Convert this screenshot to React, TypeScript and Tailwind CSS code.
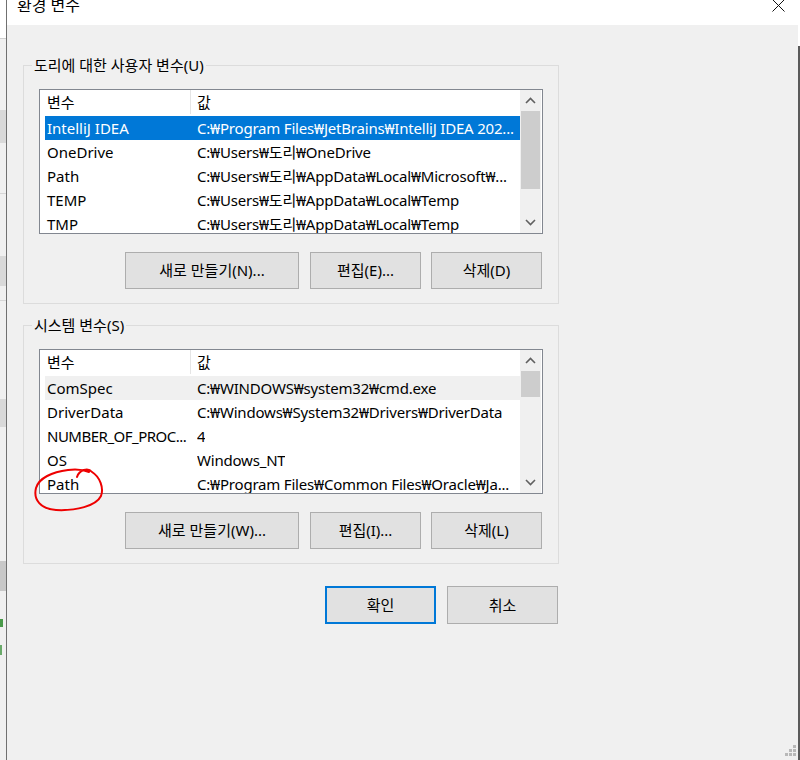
import React from "react";

type Row = { name: string; value: string; tone?: "selected" | "gray"; tight?: boolean };

const userRows: Row[] = [
	{ name: "IntelliJ IDEA", value: "C:₩Program Files₩JetBrains₩IntelliJ IDEA 202...", tone: "selected" },
	{ name: "OneDrive", value: "C:₩Users₩도리₩OneDrive" },
	{ name: "Path", value: "C:₩Users₩도리₩AppData₩Local₩Microsoft₩..." },
	{ name: "TEMP", value: "C:₩Users₩도리₩AppData₩Local₩Temp" },
	{ name: "TMP", value: "C:₩Users₩도리₩AppData₩Local₩Temp" },
];

const systemRows: Row[] = [
	{ name: "ComSpec", value: "C:₩WINDOWS₩system32₩cmd.exe", tone: "gray" },
	{ name: "DriverData", value: "C:₩Windows₩System32₩Drivers₩DriverData" },
	{ name: "NUMBER_OF_PROC...", value: "4", tight: true },
	{ name: "OS", value: "Windows_NT" },
	{ name: "Path", value: "C:₩Program Files₩Common Files₩Oracle₩Ja..." },
];

function Chevron({ up }: { up?: boolean }) {
	return (
		<svg width="11" height="7" viewBox="0 0 11 7" className="text-[#606060]">
			<path
				d={up ? "M1 6 L5.5 1.5 L10 6" : "M1 1 L5.5 5.5 L10 1"}
				fill="none"
				stroke="currentColor"
				strokeWidth="1.6"
			/>
		</svg>
	);
}

function ListBox({ rows, thumb }: { rows: Row[]; thumb: "tall" | "short" }) {
	return (
		<div className="flex h-[145px] w-[504px] border border-[#828790] bg-white">
			<div className="flex min-w-0 flex-1 flex-col overflow-hidden">
				<div className="flex h-[24px] shrink-0 items-center">
					<div className="flex h-full w-[151px] items-center border-r border-[#e5e5e5] pl-[7px]">변수</div>
					<div className="pl-[6px]">값</div>
				</div>
				<div className="flex flex-col pl-[5px] pt-[2px]">
					{rows.map((r) => (
						<div
							key={r.name}
							className={
								"flex h-[24px] shrink-0 items-center whitespace-nowrap " +
								(r.tone === "selected"
									? "bg-[#0078d7] text-white"
									: r.tone === "gray"
										? "bg-[#f0f0f0]"
										: "")
							}
						>
							<div
								className={
									"w-[152px] shrink-0 overflow-hidden pl-[2px] " + (r.tight ? "tracking-[-0.5px]" : "")
								}
							>
								{r.name}
							</div>
							<div className="overflow-hidden tracking-[-0.2px]">{r.value}</div>
						</div>
					))}
				</div>
			</div>
			<div className="mr-px flex w-[21px] flex-col bg-[#f0f0f0]">
				<div className="flex h-[21px] items-center justify-center">
					<Chevron up />
				</div>
				<div className={"mx-px bg-[#cdcdcd] " + (thumb === "tall" ? "h-[78px]" : "h-[26px]")} />
				<div className="flex-1" />
				<div className="flex h-[22px] items-center justify-center">
					<Chevron />
				</div>
			</div>
		</div>
	);
}

function Btn({ label, w }: { label: string; w: string }) {
	return (
		<div className={"flex h-[37px] items-center justify-center border border-[#adadad] bg-[#e1e1e1] " + w}>
			{label}
		</div>
	);
}

function GroupBox({
	title,
	rows,
	thumb,
	buttons,
}: {
	title: string;
	rows: Row[];
	thumb: "tall" | "short";
	buttons: string[];
}) {
	return (
		<div className="relative h-[239px] w-[536px] border border-[#dcdcdc] pl-[15px] pt-[23px]">
			<span className="absolute -top-[11px] left-[8px] bg-[#f0f0f0] px-[2px] leading-[20px]">{title}</span>
			<ListBox rows={rows} thumb={thumb} />
			<div className="mt-[18px] flex pl-[86px]">
				<Btn label={buttons[0]} w="w-[174px]" />
				<div className="ml-[11px]">
					<Btn label={buttons[1]} w="w-[111px]" />
				</div>
				<div className="ml-[10px]">
					<Btn label={buttons[2]} w="w-[111px]" />
				</div>
			</div>
		</div>
	);
}

function LeftStrip() {
	return (
		<div className="flex w-[6px] shrink-0 flex-col bg-[#f0f0f0]">
			<div className="h-[38px] bg-white" />
			<div className="h-px bg-[#d0d0d0]" />
			<div className="mt-[71px] h-[33px] bg-[#d9d9d9]" />
			<div className="mt-[50px] h-px bg-[#d6d6d6]" />
			<div className="mt-[62px] h-[30px] bg-[#d9d9d9]" />
			<div className="mt-[14px] h-px bg-[#d6d6d6]" />
			<div className="mt-[98px] h-[28px] bg-[#d9d9d9]" />
			<div className="mt-[134px] h-[30px] bg-[#c8c8c8]" />
			<div className="mt-[28px] h-[8px] w-[3px] bg-[#4a9a4a]" />
			<div className="mt-[18px] h-[10px] w-[2px] bg-[#6aaa6a]" />
		</div>
	);
}

export default function App() {
	return (
		<div className="relative flex h-[760px] w-[800px] overflow-hidden bg-[#f0f0f0] font-['Noto_Sans','Noto_Sans_CJK_KR',sans-serif] text-[15px] text-black">
			<LeftStrip />
			<div className="w-px shrink-0 bg-[#707070]" />
			<div className="flex min-w-0 flex-1 flex-col">
				<div className="flex h-[25px] shrink-0 items-start justify-between bg-white">
					<span className="-mt-[5px] pl-[10px] text-[16px] leading-[20px]">환경 변수</span>
					<svg width="13" height="13" viewBox="0 0 13 13" className="-mt-[1px] mr-[13px]">
						<path d="M0.5 0.5 L12.5 12.5 M12.5 0.5 L0.5 12.5" stroke="#111" strokeWidth="1" />
					</svg>
				</div>
				<div className="flex flex-1 flex-col pl-[16px] pt-[40px]">
					<GroupBox
						title="도리에 대한 사용자 변수(U)"
						rows={userRows}
						thumb="tall"
						buttons={["새로 만들기(N)...", "편집(E)...", "삭제(D)"]}
					/>
					<div className="mt-[21px]">
						<GroupBox
							title="시스템 변수(S)"
							rows={systemRows}
							thumb="short"
							buttons={["새로 만들기(W)...", "편집(I)...", "삭제(L)"]}
						/>
					</div>
					<div className="mt-[22px] flex pl-[302px]">
						<div className="flex h-[38px] w-[111px] items-center justify-center border-2 border-[#0078d7] bg-[#e1e1e1]">
							확인
						</div>
						<div className="ml-[11px] flex h-[38px] w-[111px] items-center justify-center border border-[#adadad] bg-[#e1e1e1]">
							취소
						</div>
					</div>
				</div>
			</div>
			<div className="flex w-[2px] shrink-0 flex-col">
				<div className="h-[46px] bg-white" />
				<div className="flex-1 bg-[#5a5a5a]" />
			</div>
			<svg className="pointer-events-none absolute inset-0" width="800" height="760">
				<path
					d="M77 477 C79 470 88 467 92 472 C100 477 104 488 101 496 C96 506 76 511 56 510 C41 509 33 500 36 488 C39 478 52 472 68 470 C76 469 84 470 89 472"
					fill="none"
					stroke="#ee0000"
					strokeWidth="2"
					strokeLinecap="round"
				/>
				<g fill="#b8b8b8">
					<rect x="793" y="745" width="3" height="3" />
					<rect x="789" y="749" width="3" height="3" />
					<rect x="793" y="749" width="3" height="3" />
					<rect x="785" y="753" width="3" height="3" />
					<rect x="789" y="753" width="3" height="3" />
					<rect x="793" y="753" width="3" height="3" />
				</g>
			</svg>
		</div>
	);
}
